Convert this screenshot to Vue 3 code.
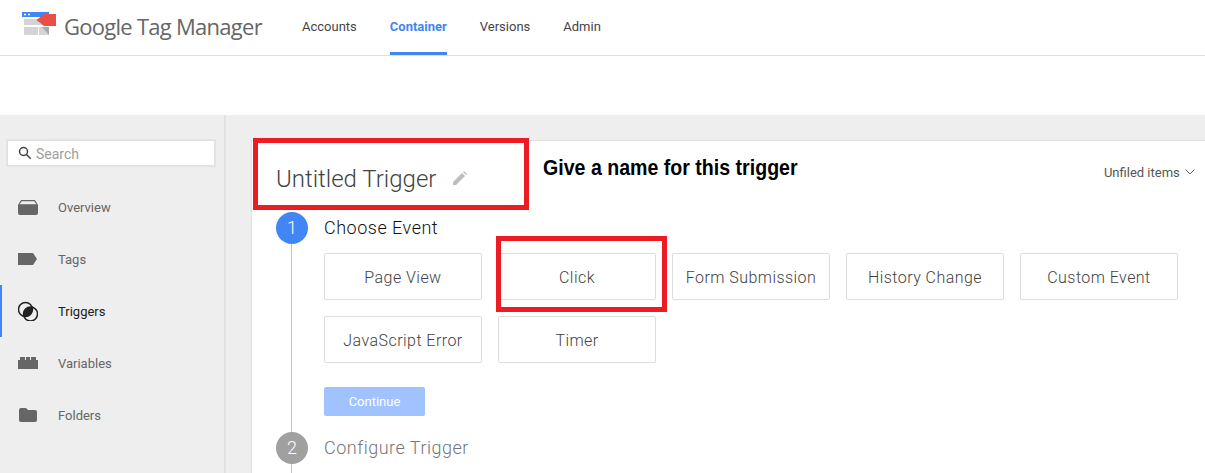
<script setup>
const tabs = [
  { name: 'Accounts' },
  { name: 'Container', active: true },
  { name: 'Versions' },
  { name: 'Admin' }
];

const navItems = [
  { name: 'Overview', icon: 'overview' },
  { name: 'Tags', icon: 'tags' },
  { name: 'Triggers', icon: 'triggers', active: true },
  { name: 'Variables', icon: 'variables' },
  { name: 'Folders', icon: 'folders' }
];

const events = ['Page View', 'Click', 'Form Submission', 'History Change', 'Custom Event', 'JavaScript Error', 'Timer'];
</script>

<template>
  <div class="page">
    <header class="topbar">
      <div class="brand">
        <svg class="logo" width="34" height="26" viewBox="0 0 34 26">
          <rect x="0" y="1" width="27" height="5" fill="#4285f4" />
          <circle cx="3" cy="3.500" r="1" fill="#fff" />
          <circle cx="7" cy="3.500" r="1" fill="#fff" />
          <rect x="2" y="8" width="25" height="6" fill="#d4d4d4" />
          <rect x="2" y="16" width="14" height="8" fill="#d4d4d4" />
          <rect x="17" y="16" width="10" height="8" fill="#d4d4d4" />
          <path d="M20 16h7v8z" fill="#a8a8a8" />
          <path d="M34 3v12H22l-5.500-4.500a1.500 1.500 0 0 1 0-3L22 3z" fill="#ea4f45" />
        </svg>
        <span class="brand-name">Google Tag Manager</span>
      </div>
      <nav class="tabs">
        <a v-for="tab in tabs" :key="tab.name" class="tab" :class="{ active: tab.active }">{{ tab.name }}</a>
      </nav>
    </header>
    <div class="subbar"></div>

    <div class="body">
      <aside class="sidebar">
        <div class="search">
          <svg width="14" height="14" viewBox="0 0 14 14" fill="none" stroke="#444" stroke-width="1.500">
            <circle cx="5.500" cy="5.500" r="4" />
            <path d="M8.500 8.500l4.200 4.200" />
          </svg>
          <span class="search-text">Search</span>
        </div>
        <ul class="nav">
          <li v-for="item in navItems" :key="item.name" class="nav-item" :class="{ active: item.active }">
            <svg class="nav-icon" width="20" height="20" viewBox="0 0 20 20">
              <path v-if="item.icon === 'overview'" d="M3 3h14l3 5v8a2 2 0 0 1-2 2H2a2 2 0 0 1-2-2V8zM3.700 4.200L1.700 7.200h16.600l-2-3z" fill="#666" fill-rule="evenodd" />
              <path v-else-if="item.icon === 'tags'" d="M0 4h15l4 6-4 6H0z" fill="#666" />
              <g v-else-if="item.icon === 'triggers'">
                <circle cx="7.500" cy="8.500" r="7" fill="none" stroke="#212121" stroke-width="1.500" />
                <circle cx="12.500" cy="13" r="7" fill="none" stroke="#212121" stroke-width="1.500" />
                <path d="M5.900 15.300A7 7 0 0 1 14.100 6.190 7 7 0 0 1 5.900 15.300z" fill="#212121" />
              </g>
              <path v-else-if="item.icon === 'variables'" d="M2 4h5v3h1V4h4v3h1V4h5v3h2v9H0V7h2z" fill="#666" />
              <path v-else d="M3 3h5l2 2h7a2 2 0 0 1 2 2v8a2 2 0 0 1-2 2H3a2 2 0 0 1-2-2V5a2 2 0 0 1 2-2z" fill="#666" />
            </svg>
            <span>{{ item.name }}</span>
          </li>
        </ul>
      </aside>

      <main class="content">
        <section class="panel">
          <div class="panel-head">
            <h1 class="title">
              Untitled Trigger
              <svg width="14" height="14" viewBox="0 0 14 14" class="pencil">
                <path d="M0 14v-3L9 2l3 3-9 9zM10 1l1-1 3 3-1 1z" fill="#bdbdbd" />
              </svg>
            </h1>
            <div class="folder">
              Unfiled items
              <svg width="10" height="6" viewBox="0 0 10 6" fill="none" stroke="#5f6368" stroke-width="1">
                <path d="M.5.500L5 5 9.500.500" />
              </svg>
            </div>
          </div>

          <div class="step">
            <div class="marker">
              <span class="num current">1</span>
              <span class="line"></span>
            </div>
            <div class="step-body">
              <h2 class="step-title current">Choose Event</h2>
              <div class="events">
                <button v-for="ev in events" :key="ev" class="event">{{ ev }}</button>
              </div>
              <button class="continue">Continue</button>
            </div>
          </div>

          <div class="step second">
            <div class="marker">
              <span class="num">2</span>
              <span class="line"></span>
            </div>
            <div class="step-body">
              <h2 class="step-title">Configure Trigger</h2>
            </div>
          </div>
        </section>
      </main>
    </div>

    <!-- annotations drawn on top of the screenshot -->
    <div class="mark mark-name"></div>
    <div class="mark mark-click"></div>
    <div class="note">Give a name for this trigger</div>
  </div>
</template>

<style>
html, body {
  margin: 0;
  height: 100%;
  overflow: hidden;
}
</style>

<style scoped>
.page {
  position: relative;
  width: 1205px;
  height: 473px;
  overflow: hidden;
  background: #fff;
  font-family: Roboto, "Liberation Sans", sans-serif;
}

.topbar {
  display: flex;
  height: 55px;
  border-bottom: 1px solid #e0e0e0;
  box-sizing: content-box;
}

.brand {
  display: flex;
  align-items: center;
  width: 302px;
  padding-left: 22px;
  box-sizing: border-box;
}

.logo {
  align-self: flex-start;
  margin-top: 11px;
  margin-right: 8px;
  flex: none;
}

.brand-name {
  margin-bottom: 4px;
  font-family: "Open Sans", sans-serif;
  font-size: 22px;
  letter-spacing: -0.73px;
  color: #666;
  white-space: nowrap;
}

.tabs {
  display: flex;
  gap: 33px;
}

.tab {
  display: flex;
  align-items: center;
  height: 52px;
  border-bottom: 3px solid transparent;
  font-size: 13px;
  color: #444;
}

.tab.active {
  color: #4285f4;
  font-weight: 700;
  border-bottom-color: #4285f4;
}

.subbar {
  height: 59px;
}

.body {
  display: flex;
  height: 358px;
  background: #eee;
}

.sidebar {
  width: 224px;
  flex: none;
  border-right: 2px solid #e2e2e2;
  padding-top: 25px;
  box-sizing: content-box;
}

.search {
  display: flex;
  align-items: center;
  gap: 4px;
  width: 208px;
  height: 26px;
  margin-left: 7px;
  padding-left: 10px;
  box-sizing: border-box;
  background: #fff;
  border: 1px solid #e0e0e0;
  box-shadow: 0 0 0 1px #e4e4e4;
  font-size: 14px;
  color: #9e9e9e;
}

.search-text {
  padding-top: 2px;
}

.nav {
  list-style: none;
  margin: 15px 0 0;
  padding: 0;
}

.nav-item {
  display: flex;
  align-items: center;
  height: 52px;
  padding-left: 18px;
  box-sizing: border-box;
  font-size: 13px;
  color: #666;
}

.nav-item.active {
  color: #212121;
  border-left: 2px solid #4285f4;
  padding-left: 16px;
}

.nav-icon {
  margin-right: 20px;
  flex: none;
}

.content {
  flex: 1;
  padding: 25px 0 0 25px;
  min-width: 0;
}

.panel {
  height: 340px;
  background: #fff;
  border-top: 1px solid #e0e0e0;
  border-left: 1px solid #e0e0e0;
  padding-left: 24px;
}

.panel-head {
  display: flex;
  justify-content: space-between;
  height: 71px;
}

.title {
  margin: 23px 0 0;
  font-size: 24px;
  line-height: 30px;
  font-weight: 300;
  color: #424242;
}

.pencil {
  margin-left: 11px;
  vertical-align: 2px;
}

.folder {
  margin-top: 24px;
  margin-right: 10px;
  font-size: 13px;
  line-height: 16px;
  color: #555;
}

.folder svg {
  margin-left: 2px;
  vertical-align: 2px;
}

.step {
  display: flex;
  gap: 16px;
  height: 220px;
}

.marker {
  display: flex;
  flex-direction: column;
  width: 32px;
  flex: none;
}

.num {
  width: 32px;
  height: 32px;
  border-radius: 50%;
  background: #a0a0a0;
  color: #fff;
  font-size: 18px;
  font-weight: 300;
  line-height: 32px;
  text-align: center;
  flex: none;
}

.num.current {
  background: #4285f4;
}

.line {
  flex: 1;
  width: 1px;
  margin-left: 15px;
  background: #c4c4c4;
}

.step-title {
  margin: 0;
  font-size: 18px;
  line-height: 32px;
  font-weight: 300;
  letter-spacing: 0.5px;
  color: #757575;
}

.step-title.current {
  color: #111;
}

.events {
  display: flex;
  flex-wrap: wrap;
  gap: 16px;
  width: 870px;
  margin-top: 9px;
}

.event {
  width: 158px;
  height: 47px;
  padding: 1px 0 0;
  background: #fff;
  border: 1px solid #ddd;
  border-radius: 2px;
  font-family: inherit;
  font-size: 16px;
  font-weight: 300;
  letter-spacing: 0.45px;
  color: #424242;
}

.continue {
  display: block;
  width: 101px;
  height: 29px;
  margin-top: 24px;
  padding: 0;
  background: #a0c3ff;
  border: none;
  border-radius: 2px;
  font-family: inherit;
  font-size: 13px;
  color: #fff;
}

.mark {
  position: absolute;
  border: 5px solid #ed1c24;
  box-sizing: border-box;
}

.mark-name {
  left: 253px;
  top: 138px;
  width: 276px;
  height: 72px;
}

.mark-click {
  left: 496px;
  top: 236px;
  width: 171px;
  height: 76px;
}

.note {
  position: absolute;
  left: 543px;
  top: 155px;
  font-family: "Liberation Sans", Arial, sans-serif;
  font-size: 22px;
  line-height: 26px;
  font-weight: 700;
  color: #000;
  white-space: nowrap;
  transform: scaleX(0.89);
  transform-origin: left center;
}
</style>
